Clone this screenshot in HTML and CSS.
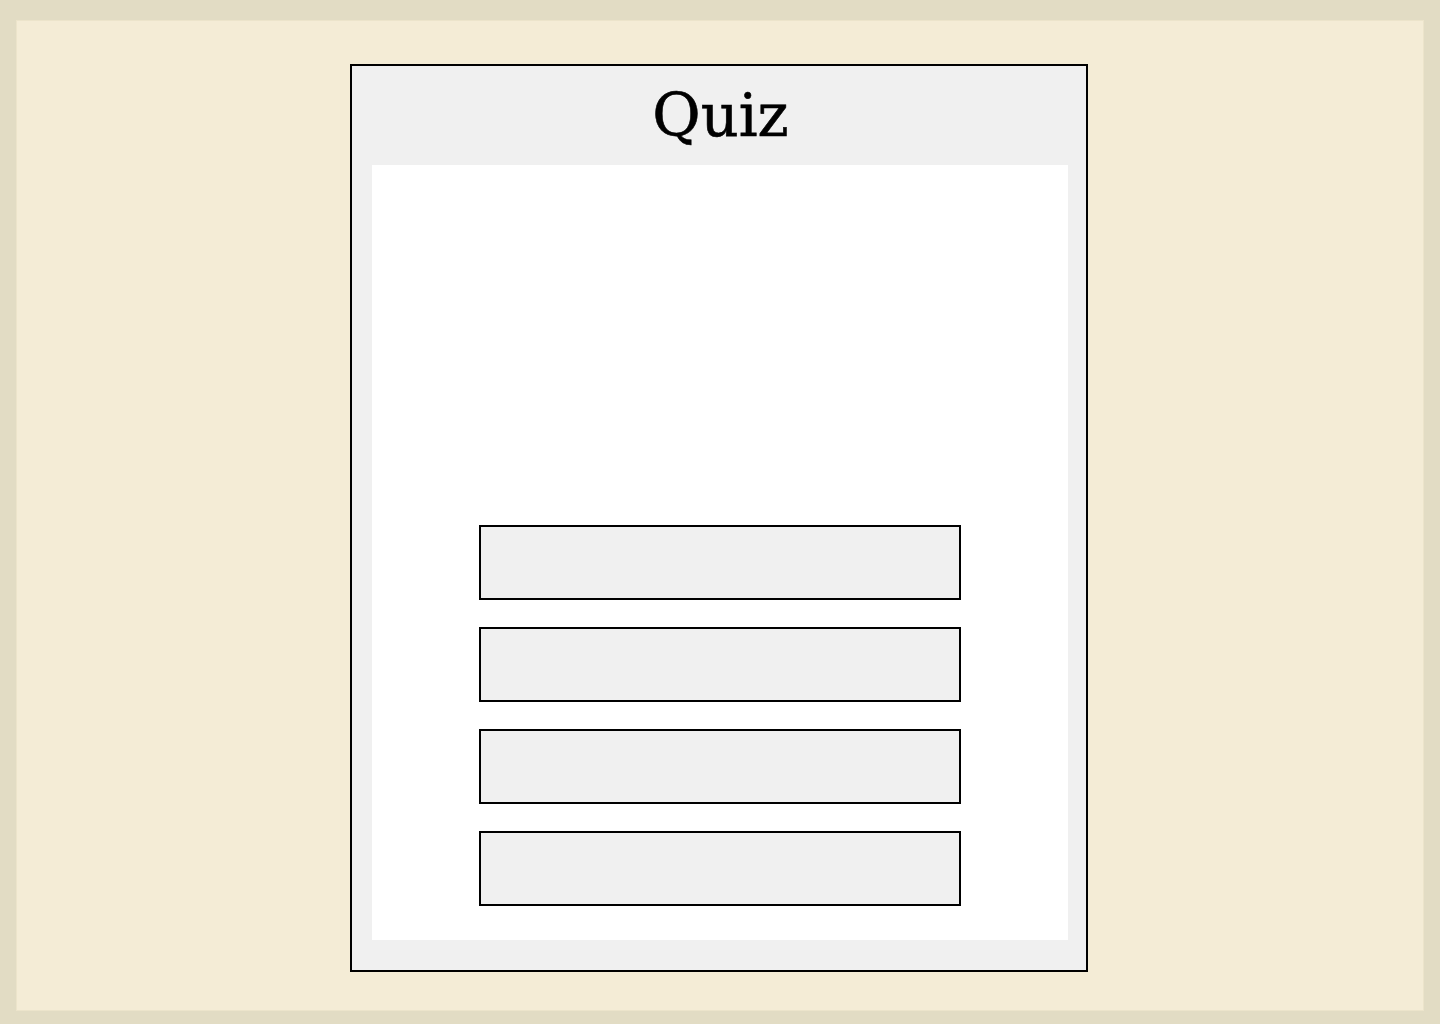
FILE: index.html
```html
<!DOCTYPE html>
<html lang="en">
<head>
<meta charset="utf-8">
<title>Quiz</title>
<link rel="stylesheet" href="styles.css">
</head>
<body>
<div class="frame">
  <main class="quiz">
    <h1 class="quiz-title">Quiz</h1>
    <section class="quiz-body">
      <div class="question"></div>
      <div class="answers">
        <button class="answer" type="button"></button>
        <button class="answer" type="button"></button>
        <button class="answer" type="button"></button>
        <button class="answer" type="button"></button>
      </div>
    </section>
  </main>
</div>
</body>
</html>
```
FILE: styles.css
```css
html, body {
  margin: 0;
  padding: 0;
}
body {
  background: #e2dcc4;
  height: 1024px;
  overflow: hidden;
}
.frame {
  box-sizing: border-box;
  margin: 20px 16px 0 16px;
  height: 991px;
  background: #f4ecd6;
  border: 1px solid #ece4cb;
  padding: 43px 3px 0 0;
}
.quiz {
  box-sizing: border-box;
  width: 738px;
  height: 908px;
  margin: 0 auto;
  border: 2px solid #000;
  background: #f0f0f0;
  padding: 0 18px 30px 20px;
  display: flex;
  flex-direction: column;
}
.quiz-title {
  margin: 0;
  height: 99px;
  display: flex;
  align-items: center;
  justify-content: center;
  font-family: "DejaVu Serif", "Liberation Serif", serif;
  font-weight: normal;
  font-size: 59px;
  color: #000;
  padding-left: 2px;
  -webkit-text-stroke: 0.6px #000;
}
.quiz-body {
  flex: 1;
  background: #fff;
  display: flex;
  flex-direction: column;
  align-items: center;
  justify-content: flex-end;
  padding-bottom: 34px;
}
.answers {
  display: flex;
  flex-direction: column;
  gap: 27px;
}
.answer {
  box-sizing: border-box;
  width: 482px;
  height: 75px;
  border: 2px solid #000;
  background: #f0f0f0;
  margin: 0;
  padding: 0;
}
```
